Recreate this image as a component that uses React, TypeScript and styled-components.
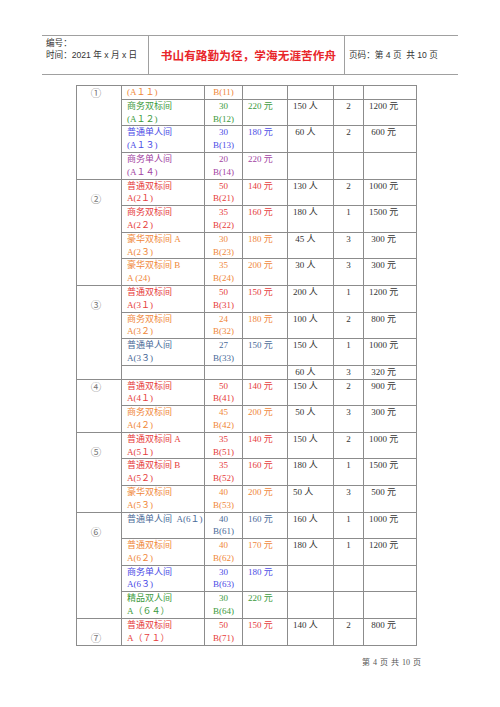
import React from 'react'
import styled, {createGlobalStyle} from 'styled-components'

const GlobalStyle = createGlobalStyle`
  html, body {
    margin: 0;
    padding: 0;
    background: #fff;
  }
`

const c = {
  orange: '#f0873a',
  green: '#3c9a3c',
  blue: '#4c4ce6',
  purple: '#a23fa2',
  red: '#e63b3b',
  slate: '#4a6a98',
  dark: '#333'
}

type Row = {
  label: string[]
  color: string
  qty: string[]
  price?: string
  people?: string
  rooms?: string
  total?: string
}

type Group = {mark: string, drop: boolean, rows: Row[]}

const sp = '\u00a0'

const groups: Group[] = [
  {mark: '①', drop: false, rows: [
    {label: ['(A１１)'], color: c.orange, qty: ['B(11)']},
    {label: ['商务双标间', '(A１２)'], color: c.green, qty: ['30', 'B(12)'], price: '220 元', people: '150 人', rooms: '2', total: '1200 元'},
    {label: ['普通单人间', '(A１３)'], color: c.blue, qty: ['30', 'B(13)'], price: '180 元', people: sp + '60 人', rooms: '2', total: sp + '600 元'},
    {label: ['商务单人间', '(A１４)'], color: c.purple, qty: ['20', 'B(14)'], price: '220 元'},
  ]},
  {mark: '②', drop: true, rows: [
    {label: ['普通双标间', 'A(2１)'], color: c.red, qty: ['50', 'B(21)'], price: '140 元', people: '130 人', rooms: '2', total: '1000 元'},
    {label: ['商务双标间', 'A(2２)'], color: c.red, qty: ['35', 'B(22)'], price: '160 元', people: '180 人', rooms: '1', total: '1500 元'},
    {label: ['豪华双标间 A', 'A(2３)'], color: c.orange, qty: ['30', 'B(23)'], price: '180 元', people: sp + '45 人', rooms: '3', total: sp + '300 元'},
    {label: ['豪华双标间 B', 'A (24)'], color: c.orange, qty: ['35', 'B(24)'], price: '200 元', people: sp + '30 人', rooms: '3', total: sp + '300 元'},
  ]},
  {mark: '③', drop: true, rows: [
    {label: ['普通双标间', 'A(3１)'], color: c.red, qty: ['50', 'B(31)'], price: '150 元', people: '200 人', rooms: '1', total: '1200 元'},
    {label: ['商务双标间', 'A(3２)'], color: c.orange, qty: ['24', 'B(32)'], price: '180 元', people: '100 人', rooms: '2', total: sp + '800 元'},
    {label: ['普通单人间', 'A(3３)'], color: c.slate, qty: ['27', 'B(33)'], price: '150 元', people: '150 人', rooms: '1', total: '1000 元'},
    {label: [], color: c.dark, qty: [], people: sp + '60 人', rooms: '3', total: sp + '320 元'},
  ]},
  {mark: '④', drop: false, rows: [
    {label: ['普通双标间', 'A(4１)'], color: c.red, qty: ['50', 'B(41)'], price: '140 元', people: '150 人', rooms: '2', total: sp + '900 元'},
    {label: ['商务双标间', 'A(4２)'], color: c.orange, qty: ['45', 'B(42)'], price: '200 元', people: sp + '50 人', rooms: '3', total: sp + '300 元'},
  ]},
  {mark: '⑤', drop: true, rows: [
    {label: ['普通双标间 A', 'A(5１)'], color: c.red, qty: ['35', 'B(51)'], price: '140 元', people: '150 人', rooms: '2', total: '1000 元'},
    {label: ['普通双标间 B', 'A(5２)'], color: c.red, qty: ['35', 'B(52)'], price: '160 元', people: '180 人', rooms: '1', total: '1500 元'},
    {label: ['豪华双标间', 'A(5３)'], color: c.orange, qty: ['40', 'B(53)'], price: '200 元', people: '50 人', rooms: '3', total: sp + '500 元'},
  ]},
  {mark: '⑥', drop: true, rows: [
    {label: ['普通单人间' + sp + sp + 'A(6１)'], color: c.slate, qty: ['40', 'B(61)'], price: '160 元', people: '160 人', rooms: '1', total: '1000 元'},
    {label: ['普通双标间', 'A(6２)'], color: c.orange, qty: ['40', 'B(62)'], price: '170 元', people: '180 人', rooms: '1', total: '1200 元'},
    {label: ['商务单人间', 'A(6３)'], color: c.blue, qty: ['30', 'B(63)'], price: '180 元'},
    {label: ['精品双人间', 'A（６４）'], color: c.green, qty: ['30', 'B(64)'], price: '220 元'},
  ]},
  {mark: '⑦', drop: true, rows: [
    {label: ['普通双标间', 'A（７１）'], color: c.red, qty: ['50', 'B(71)'], price: '150 元', people: '140 人', rooms: '2', total: sp + '800 元'},
  ]},
]

const Page = styled.div`
  width: 500px;
  height: 707px;
  padding-top: 35px;
  box-sizing: border-box;
  font-family: "Liberation Serif", "Noto Sans CJK SC", serif;
  position: relative;
`

const HeaderBar = styled.div`
  margin: 0 42px;
  height: 38px;
  display: grid;
  grid-template-columns: 106px 196px 1fr;
  border-top: 1px solid #a0a0a0;
  border-bottom: 1px solid #a0a0a0;
  font-family: "Liberation Sans", "Noto Sans CJK SC", sans-serif;
  font-size: 8.6px;
  color: #333;
`

const HeaderCell = styled.div<{$divider?: boolean, $center?: boolean, $middle?: boolean}>`
  display: flex;
  flex-direction: column;
  justify-content: ${p => (p.$center || p.$middle) ? 'center' : 'flex-start'};
  align-items: ${p => p.$center ? 'center' : 'flex-start'};
  border-left: ${p => p.$divider ? '1px solid #a0a0a0' : 'none'};
  padding: 2px 0 0 4px;
  line-height: 11.5px;
`

const Motto = styled.span`
  color: #e8262a;
  font-size: 11.6px;
  font-weight: bold;
  letter-spacing: 0.1px;
`

const Table = styled.table`
  margin: 10px 0 0 76px;
  border-collapse: collapse;
  table-layout: fixed;
  width: 340px;
  font-size: 9px;
  line-height: 12.8px;
  color: ${c.dark};
`

const Column = styled.col<{$w: number}>`
  width: ${p => p.$w}px;
`

const Cell = styled.td<{$color?: string, $align?: string, $pad?: number}>`
  border: 1px solid #8c8c8c;
  padding: 0 0 0 ${p => p.$pad ?? 0}px;
  vertical-align: top;
  text-align: ${p => p.$align || 'left'};
  color: ${p => p.$color || c.dark};
  white-space: nowrap;
  overflow: hidden;
`

const MarkCell = styled.td<{$drop: boolean}>`
  border: 1px solid #8c8c8c;
  vertical-align: top;
  text-align: center;
  padding: ${p => p.$drop ? '12px' : '0'} 6px 0 0;
  color: #777;
  font-family: "Noto Sans CJK SC", "DejaVu Sans", sans-serif;
  font-size: 10.5px;
  line-height: 14px;
`

const Line = styled.div`
  height: 12.8px;
`

const Footer = styled.div`
  position: absolute;
  left: 362px;
  top: 656px;
  font-family: "Liberation Serif", "Noto Sans CJK SC", serif;
  font-size: 8px;
  color: #555;
  word-spacing: 1px;
`

const Lines: React.FC<{items: string[]}> = ({items}) => (
  <>
    {items.map((t, i) => <Line key={i}>{t}</Line>)}
    {items.length === 0 && <Line />}
  </>
)

const TableRow: React.FC<{row: Row, mark?: React.ReactNode}> = ({row, mark}) => (
  <tr>
    {mark}
    <Cell $color={row.color} $pad={5}><Lines items={row.label} /></Cell>
    <Cell $color={row.color} $align="center"><Lines items={row.qty} /></Cell>
    <Cell $color={row.color} $pad={5}>{row.price}</Cell>
    <Cell $pad={5}>{row.people}</Cell>
    <Cell $align="center">{row.rooms}</Cell>
    <Cell $pad={5}>{row.total}</Cell>
  </tr>
)

const widths = [45, 83, 38, 45, 46, 30, 53]

export default function App() {
  return (
    <Page>
      <GlobalStyle />
      <HeaderBar>
        <HeaderCell>
          <span>编号：</span>
          <span>时间：2021 年 x 月 x 日</span>
        </HeaderCell>
        <HeaderCell $divider $center>
          <Motto>书山有路勤为径，学海无涯苦作舟</Motto>
        </HeaderCell>
        <HeaderCell $divider $middle>
          <span>页码：第 4 页&nbsp; 共 10 页</span>
        </HeaderCell>
      </HeaderBar>

      <Table>
        <colgroup>
          {widths.map((w, i) => <Column key={i} $w={w} />)}
        </colgroup>
        <tbody>
          {groups.map(g => g.rows.map((r, i) => (
            <TableRow
              key={g.mark + i}
              row={r}
              mark={i === 0 ? <MarkCell rowSpan={g.rows.length} $drop={g.drop}>{g.mark}</MarkCell> : undefined}
            />
          )))}
        </tbody>
      </Table>

      <Footer>第 4 页 共 10 页</Footer>
    </Page>
  )
}
